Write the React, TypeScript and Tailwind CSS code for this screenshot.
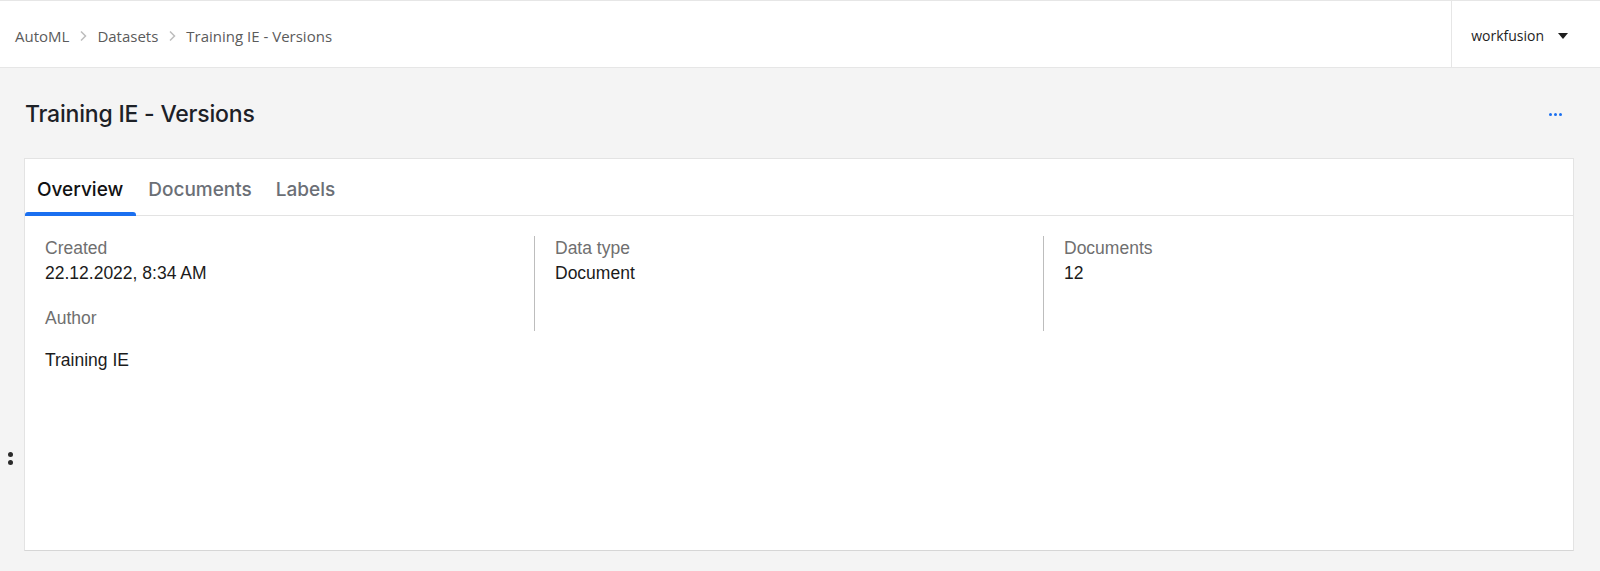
import { useState } from "react";

const tabs = ["Overview", "Documents", "Labels"];

function Chevron() {
  return (
    <svg width="10" height="14" viewBox="0 0 10 14" className="mx-[9px]">
      <path d="M3 2.5 L7.5 7 L3 11.5" fill="none" stroke="#bdbdbd" strokeWidth="1.5" />
    </svg>
  );
}

function Field({ label, value }: { label: string; value: string }) {
  return (
    <div className="leading-[25px]">
      <div className="text-[#6f6f6f]">{label}</div>
      {value && <div className="text-[#1b1b1b]">{value}</div>}
    </div>
  );
}

export default function App() {
  const [tab, setTab] = useState("Overview");

  return (
    <div className="min-h-[571px] bg-[#f4f4f4] relative">
      <header className="h-[68px] bg-white border-t border-b border-[#e6e6e6] flex items-center justify-between font-['Open_Sans',sans-serif]">
        <nav className="flex items-center pl-[15px] pt-[4px] text-[15px] text-[#5b5b5b]">
          <span>AutoML</span>
          <Chevron />
          <span>Datasets</span>
          <Chevron />
          <span>Training IE - Versions</span>
        </nav>
        <div className="h-full flex items-center border-l border-[#e6e6e6] pl-[19px] pr-[32px] pt-[3px] text-[14px] text-[#1e1e1e]">
          <span>workfusion</span>
          <svg width="10" height="6" viewBox="0 0 10 6" className="ml-[14px]">
            <path d="M0 0 H10 L5 6 Z" fill="#1e1e1e" />
          </svg>
        </div>
      </header>

      <main className="px-6">
        <div className="h-[90px] pt-[3px] flex items-center justify-between">
          <h1 className="pl-px text-[23px] font-medium text-[#1d2127] font-['Inter',sans-serif] tracking-[-0.2px]">
            Training IE - Versions
          </h1>
          <button className="mr-[14px] flex gap-[2px] items-center">
            <span className="w-[3px] h-[3px] rounded-full bg-[#1a6ff0]" />
            <span className="w-[3px] h-[3px] rounded-full bg-[#1a6ff0]" />
            <span className="w-[3px] h-[3px] rounded-full bg-[#1a6ff0]" />
          </button>
        </div>

        <section className="h-[393px] mr-[2px] bg-white border border-[#e3e3e3] border-b-[#d6d6d6]">
          <div className="h-[57px] flex items-end border-b border-[#e3e3e3] font-['Inter',sans-serif]">
            {tabs.map((t) => (
              <button
                key={t}
                onClick={() => setTab(t)}
                className={`relative h-full pt-[6px] px-3 text-[19px] font-medium ${t === "Overview" ? "pl-[12px] pr-[13px]" : ""} ${tab === t ? "text-[#121212]" : "text-[#6b6f76]"}`}
              >
                {t}
                {tab === t && (
                  <span className="absolute left-0 right-0 -bottom-px h-[4px] rounded-t-[3px] bg-[#1a6ff0]" />
                )}
              </button>
            ))}
          </div>

          <div className="pt-5 font-['Liberation_Sans',Arial,sans-serif] text-[17.5px]">
            <div className="flex">
              <div className="w-[509px] pl-5 h-[95px] flex flex-col gap-[20px]">
                <Field label="Created" value="22.12.2022, 8:34 AM" />
                <Field label="Author" value="" />
              </div>
              <div className="w-[509px] h-[95px] border-l border-[#bdbdbd] pl-5">
                <Field label="Data type" value="Document" />
              </div>
              <div className="flex-1 h-[95px] border-l border-[#bdbdbd] pl-5">
                <Field label="Documents" value="12" />
              </div>
            </div>
            <div className="pl-5 mt-[17px] leading-[25px] text-[#1b1b1b]">Training IE</div>
          </div>
        </section>
      </main>

      <div className="absolute left-[8px] top-[452px] flex flex-col gap-[3px]">
        <span className="w-[5px] h-[5px] rounded-full bg-[#2a2a2a]" />
        <span className="w-[5px] h-[5px] rounded-full bg-[#2a2a2a]" />
      </div>
    </div>
  );
}
